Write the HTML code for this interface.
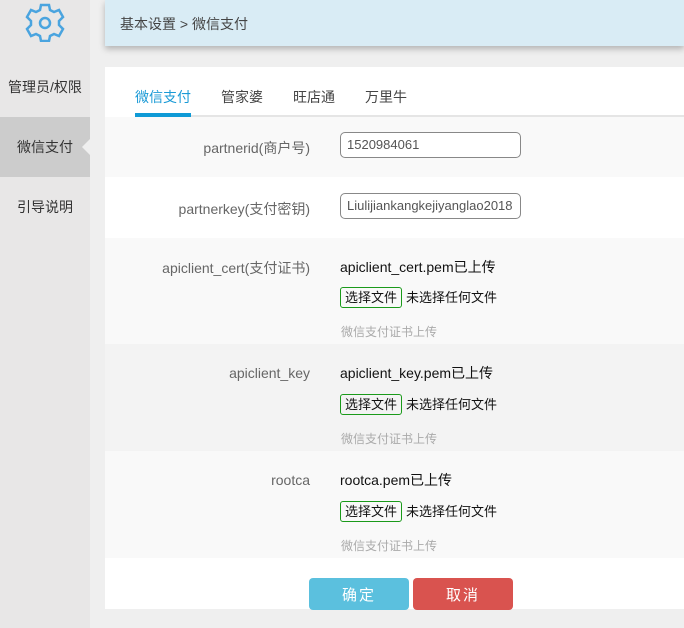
<!DOCTYPE html><html><head><meta charset="utf-8"><style>
*{margin:0;padding:0;box-sizing:border-box}
body{width:684px;height:628px;overflow:hidden;background:#efefef;font-family:"Liberation Sans","Noto Sans CJK SC",sans-serif;position:relative;color:#333}
.side{position:absolute;left:0;top:0;width:90px;height:628px;background:#e8e7e7}
.si{position:absolute;left:0;width:90px;height:60px;line-height:60px;text-align:center;font-size:14px;color:#333}
.act{background:#ccc}
.act:after{content:"";position:absolute;right:0;top:22px;border:8px solid transparent;border-right-color:#efefef}
.bc{position:absolute;left:105px;top:0;width:579px;height:46px;background:#d9ecf5;box-shadow:0 3px 6px rgba(0,0,0,.25);font-size:14px;line-height:48px;padding-left:15px;color:#444}
.card{position:absolute;left:105px;top:67px;width:579px;height:542px;background:#fff}
.tabs{position:absolute;left:30px;top:0;width:549px;height:50px;border-bottom:2px solid #e5e5e5}
.tab{position:absolute;top:20px;font-size:14px;color:#444}
.row{position:absolute;left:0;width:579px}
.lab{position:absolute;right:374px;font-size:14px;color:#666;white-space:nowrap}
.inp{position:absolute;left:235px;width:181px;height:26px;border:1px solid #888;border-radius:5px;background:#fff;font-size:13px;color:#555;padding-left:6px;line-height:24px;white-space:nowrap;overflow:hidden}
.t1{position:absolute;left:235px;font-size:14px;color:#111}
.f{position:absolute;left:235px;font-size:13px;color:#111}
.f span{display:inline-block;border:1px solid #1a9a1a;border-radius:3px;padding:0 4px;height:21px;line-height:19px;margin-right:4px}
.h{position:absolute;left:236px;font-size:12px;color:#aaa}
.btn{position:absolute;top:511px;width:100px;height:32px;border-radius:4px;color:#fff;font-size:15px;text-align:center;line-height:36px;letter-spacing:2px}
</style></head><body>
<div class="side">
<svg style="position:absolute;left:25px;top:2px" width="40" height="40" viewBox="0 0 40 40"><path fill="none" stroke="#4aa4df" stroke-width="2.5" d="M16 3h8l1 5 4 2 5-2 4 7-4 4v4l4 4-4 7-5-2-4 2-1 5h-8l-1-5-4-2-5 2-4-7 4-4v-4l-4-4 4-7 5 2 4-2z"/><circle cx="20" cy="21" r="5" fill="none" stroke="#4aa4df" stroke-width="2.5"/></svg>
<div class="si" style="top:57px">管理员/权限</div>
<div class="si act" style="top:117px">微信支付</div>
<div class="si" style="top:177px">引导说明</div>
</div>
<div class="bc">基本设置 &gt; 微信支付</div>
<div class="card">
<div class="tabs">
<div class="tab" style="left:0;color:#1a9ad6">微信支付</div>
<div style="position:absolute;left:0;top:46px;width:56px;height:4px;background:#0f9ad6"></div>
<div class="tab" style="left:86px">管家婆</div>
<div class="tab" style="left:158px">旺店通</div>
<div class="tab" style="left:230px">万里牛</div>
</div>
<div class="row" style="top:50px;height:60px;background:#f9f9f9"><div class="lab" style="top:21px">partnerid(商户号)</div><div class="inp" style="top:15px">1520984061</div></div>
<div class="row" style="top:110px;height:61px;background:#fff"><div class="lab" style="top:22px">partnerkey(支付密钥)</div><div class="inp" style="top:16px">Liulijiankangkejiyanglao2018</div></div>
<div class="row" style="top:171px;height:106px;background:#f9f9f9"><div class="lab" style="top:20px">apiclient_cert(支付证书)</div><div class="t1" style="top:19px">apiclient_cert.pem已上传</div><div class="f" style="top:49px"><span>选择文件</span>未选择任何文件</div><div class="h" style="top:85px">微信支付证书上传</div></div>
<div class="row" style="top:277px;height:107px;background:#f3f3f3"><div class="lab" style="top:21px">apiclient_key</div><div class="t1" style="top:19px">apiclient_key.pem已上传</div><div class="f" style="top:50px"><span>选择文件</span>未选择任何文件</div><div class="h" style="top:86px">微信支付证书上传</div></div>
<div class="row" style="top:384px;height:107px;background:#f9f9f9"><div class="lab" style="top:21px">rootca</div><div class="t1" style="top:19px">rootca.pem已上传</div><div class="f" style="top:50px"><span>选择文件</span>未选择任何文件</div><div class="h" style="top:86px">微信支付证书上传</div></div>
<div class="btn" style="left:204px;background:#5bc0de">确定</div>
<div class="btn" style="left:308px;background:#d9534f">取消</div>
</div>
</body></html>
